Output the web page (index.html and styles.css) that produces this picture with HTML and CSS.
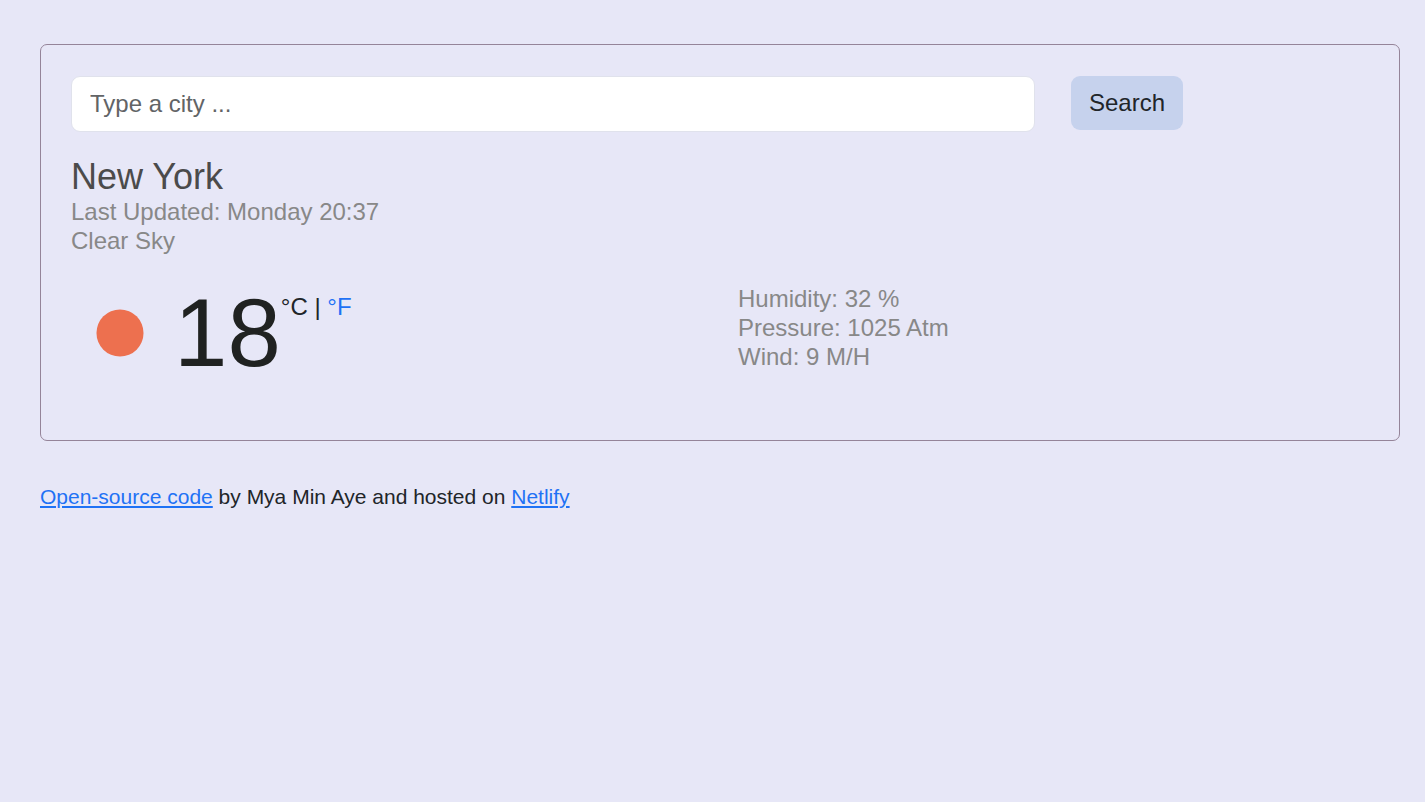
FILE: index.html
```html
<!DOCTYPE html>
<html lang="en">
<head>
<meta charset="utf-8">
<title>Weather</title>
<link rel="stylesheet" href="styles.css">
</head>
<body>
<div class="container">
  <main class="weather-app">
    <form class="search-form">
      <input class="search-input" type="search" placeholder="Type a city ..." aria-label="City">
      <button class="search-button" type="submit">Search</button>
    </form>
    <header class="overview">
      <h1 class="city">New York</h1>
      <ul class="details">
        <li>Last Updated: Monday 20:37</li>
        <li>Clear Sky</li>
      </ul>
    </header>
    <section class="current">
      <div class="temperature">
        <svg class="icon" viewBox="0 0 100 100" role="img" aria-label="Clear sky"><circle cx="50" cy="50" r="24"/></svg>
        <strong class="degrees">18</strong>
        <span class="units">°C | <a href="#">°F</a></span>
      </div>
      <ul class="details">
        <li>Humidity: 32 %</li>
        <li>Pressure: 1025 Atm</li>
        <li>Wind: 9 M/H</li>
      </ul>
    </section>
  </main>
  <footer class="credits">
    <a href="#">Open-source code</a> by Mya Min Aye and hosted on <a href="#">Netlify</a>
  </footer>
</div>
</body>
</html>
```
FILE: styles.css
```css
* {
  box-sizing: border-box;
}

body {
  margin: 0;
  background: #e7e7f7;
  color: #212529;
  font-family: "Liberation Sans", Arial, sans-serif;
  font-size: 24px;
}

a {
  color: #1f72f5;
}

.container {
  padding: 44px 25px 0 40px;
}

.weather-app {
  padding: 31px 30px 58px;
  border: 1px solid #958499;
  border-radius: 7px;
}

.search-form {
  display: grid;
  grid-template-columns: 964fr 298fr;
  column-gap: 36px;
  align-items: start;
}

.search-input {
  width: 100%;
  height: 56px;
  padding: 0 18px;
  border: 1px solid #e0e2ec;
  border-radius: 9px;
  background: #fff;
  color: #212529;
  font: inherit;
  appearance: none;
}

.search-input::placeholder {
  color: #626466;
  opacity: 1;
}

.search-button {
  justify-self: start;
  height: 54px;
  padding: 0 18px;
  border: 0;
  border-radius: 9px;
  background: #c6d2ed;
  color: #212529;
  font: inherit;
}

.overview {
  margin-top: 24px;
}

.city {
  margin: 0;
  color: #4b4b4b;
  font-size: 36px;
  font-weight: 400;
  line-height: 41px;
}

.details {
  margin: 0;
  padding: 0;
  color: #888;
  line-height: 29px;
  list-style: none;
}

.current {
  display: grid;
  grid-template-columns: 1fr 1fr;
  column-gap: 36px;
  margin-top: 29px;
}

.temperature {
  display: flex;
  align-items: flex-start;
}

.icon {
  width: 98px;
  height: 98px;
  fill: #ed704f;
}

.degrees {
  margin-left: 5px;
  color: #202221;
  font-size: 96px;
  font-weight: 400;
  line-height: 98px;
}

.units {
  line-height: 46px;
}

.units a {
  text-decoration: none;
}

.credits {
  margin-top: 42px;
  font-size: 21px;
  line-height: 28px;
}
```
